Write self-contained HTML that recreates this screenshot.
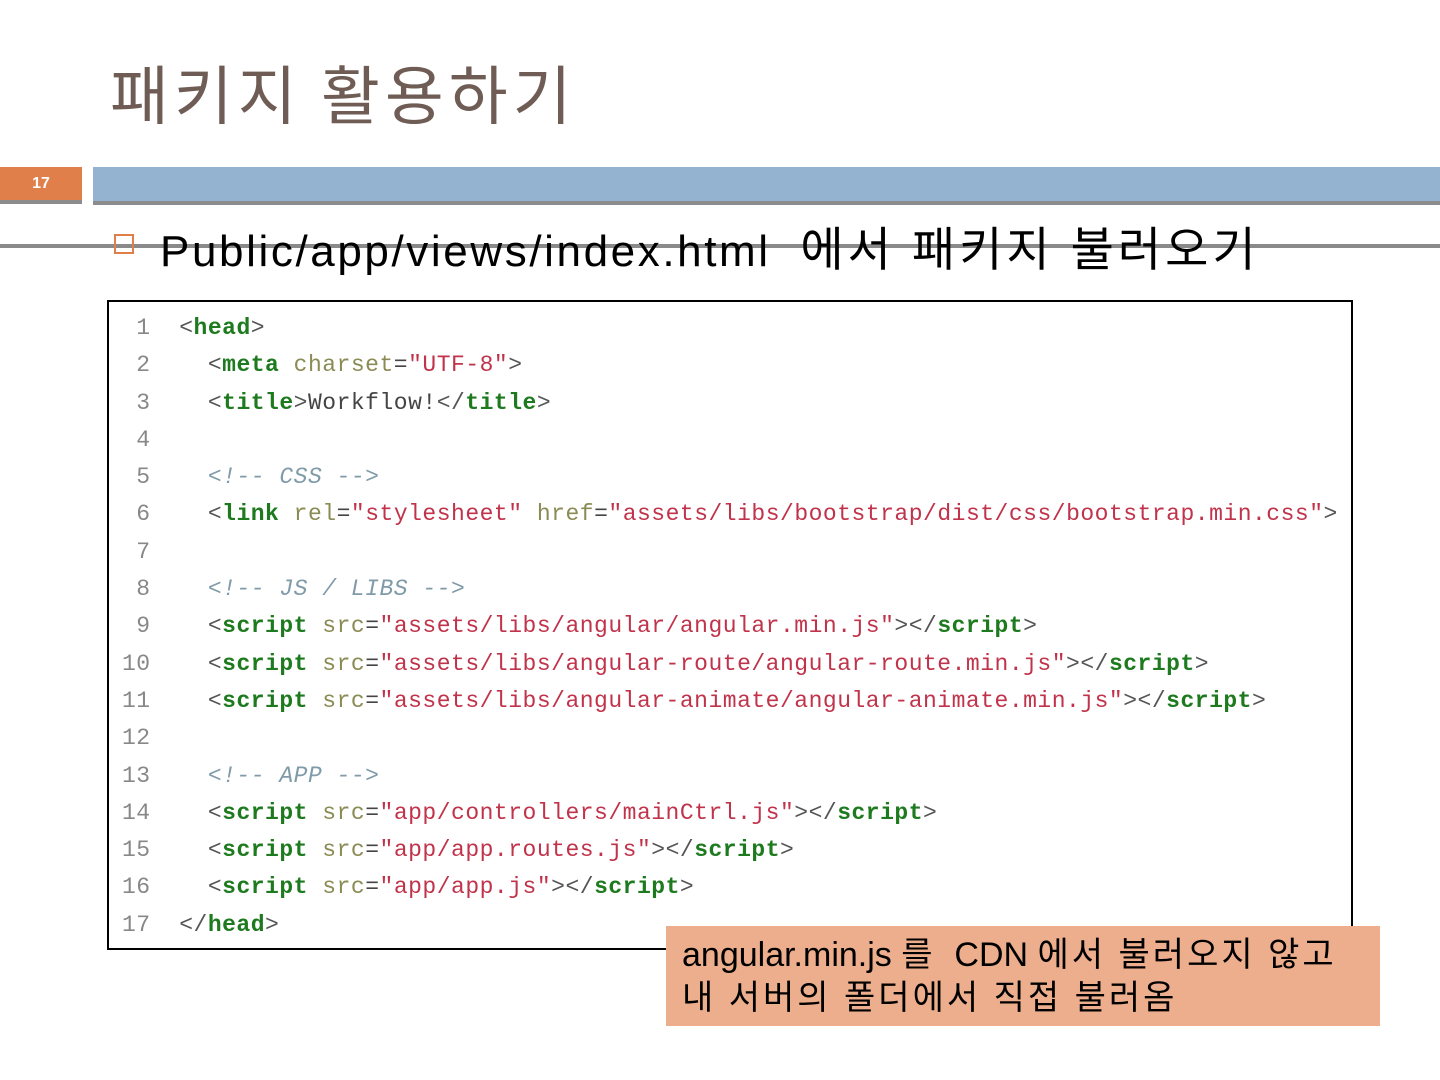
<!DOCTYPE html>
<html><head><meta charset="utf-8"><style>
body{margin:0;width:1440px;height:1080px;background:#fff;position:relative;overflow:hidden;font-family:"Liberation Sans","Noto Sans CJK KR",sans-serif}
.abs{position:absolute}
.title{left:110px;top:52px;font-size:64px;letter-spacing:5px;color:#6e5c55;line-height:80px;font-family:"Noto Sans CJK KR",sans-serif}
.num{left:0;top:167px;width:82px;height:33px;background:#e07f4a;border-bottom:4px solid #8c8c8c;color:#fff;font-weight:bold;font-size:16px;text-align:center;line-height:33px}
.bar{left:93px;top:167px;width:1347px;height:34px;background:#93b3d0;border-bottom:4px solid #8c8c8c}
.hr{left:0;top:244px;width:1440px;height:4px;background:#8a8a8a}
.bul{left:114px;top:234px;width:16px;height:16px;border:2px solid #e07f4a}
.sub{left:160px;top:222px;font-size:44px;color:#000;line-height:56px;white-space:pre;letter-spacing:2.6px}
.k{letter-spacing:4px;font-size:47px}
.code{left:107px;top:300px;width:1242px;height:646px;border:2px solid #000}
pre{margin:0;position:absolute;left:122px;top:310px;font-family:"Liberation Mono",monospace;font-size:23px;letter-spacing:0.5px;line-height:37.3px;color:#444}
.ln{color:#888}.t{color:#1e7a1e;font-weight:bold}.a{color:#8b8b55}.s{color:#c0334a}.c{color:#7f9aa8;font-style:italic}.p{color:#555}
.note{left:666px;top:926px;width:714px;height:100px;background:#ecae8c;font-size:34px;line-height:43px;color:#000;box-sizing:border-box;padding:8px 0 0 16px;white-space:pre}
.nk{letter-spacing:3px}
</style></head><body>
<div class="abs title">패키지 활용하기</div>
<div class="abs num">17</div>
<div class="abs bar"></div>
<div class="abs hr"></div>
<div class="abs bul"></div>
<div class="abs sub">Public/app/views/index.html  <span class="k">에서 패키지 불러오기</span></div>
<div class="abs code"></div>
<pre><span class="ln"> 1</span>  <span class="p">&lt;</span><span class="t">head</span><span class="p">&gt;</span>
<span class="ln"> 2</span>    <span class="p">&lt;</span><span class="t">meta</span> <span class="a">charset</span>=<span class="s">"UTF-8"</span><span class="p">&gt;</span>
<span class="ln"> 3</span>    <span class="p">&lt;</span><span class="t">title</span><span class="p">&gt;</span>Workflow!<span class="p">&lt;/</span><span class="t">title</span><span class="p">&gt;</span>
<span class="ln"> 4</span>
<span class="ln"> 5</span>    <span class="c">&lt;!-- CSS --&gt;</span>
<span class="ln"> 6</span>    <span class="p">&lt;</span><span class="t">link</span> <span class="a">rel</span>=<span class="s">"stylesheet"</span> <span class="a">href</span>=<span class="s">"assets/libs/bootstrap/dist/css/bootstrap.min.css"</span><span class="p">&gt;</span>
<span class="ln"> 7</span>
<span class="ln"> 8</span>    <span class="c">&lt;!-- JS / LIBS --&gt;</span>
<span class="ln"> 9</span>    <span class="p">&lt;</span><span class="t">script</span> <span class="a">src</span>=<span class="s">"assets/libs/angular/angular.min.js"</span><span class="p">&gt;&lt;/</span><span class="t">script</span><span class="p">&gt;</span>
<span class="ln">10</span>    <span class="p">&lt;</span><span class="t">script</span> <span class="a">src</span>=<span class="s">"assets/libs/angular-route/angular-route.min.js"</span><span class="p">&gt;&lt;/</span><span class="t">script</span><span class="p">&gt;</span>
<span class="ln">11</span>    <span class="p">&lt;</span><span class="t">script</span> <span class="a">src</span>=<span class="s">"assets/libs/angular-animate/angular-animate.min.js"</span><span class="p">&gt;&lt;/</span><span class="t">script</span><span class="p">&gt;</span>
<span class="ln">12</span>
<span class="ln">13</span>    <span class="c">&lt;!-- APP --&gt;</span>
<span class="ln">14</span>    <span class="p">&lt;</span><span class="t">script</span> <span class="a">src</span>=<span class="s">"app/controllers/mainCtrl.js"</span><span class="p">&gt;&lt;/</span><span class="t">script</span><span class="p">&gt;</span>
<span class="ln">15</span>    <span class="p">&lt;</span><span class="t">script</span> <span class="a">src</span>=<span class="s">"app/app.routes.js"</span><span class="p">&gt;&lt;/</span><span class="t">script</span><span class="p">&gt;</span>
<span class="ln">16</span>    <span class="p">&lt;</span><span class="t">script</span> <span class="a">src</span>=<span class="s">"app/app.js"</span><span class="p">&gt;&lt;/</span><span class="t">script</span><span class="p">&gt;</span>
<span class="ln">17</span>  <span class="p">&lt;/</span><span class="t">head</span><span class="p">&gt;</span></pre>
<div class="abs note">angular.min.js <span class="nk">를</span>  CDN <span class="nk">에서 불러오지 않고</span>
<span class="nk">내 서버의 폴더에서 직접 불러옴</span></div>
</body></html>
